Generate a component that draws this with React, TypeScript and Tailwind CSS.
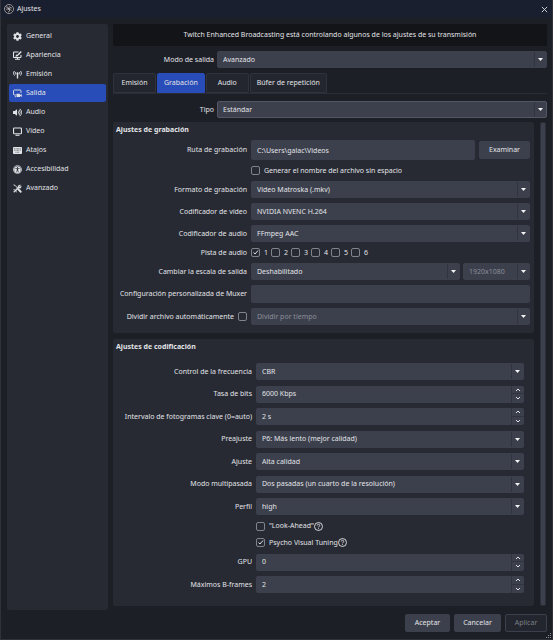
import type { ReactNode } from 'react';
import { FaCog, FaUniversalAccess, FaVolumeUp } from 'react-icons/fa';

const iconClass = 'size-[9px] shrink-0';

function AppearanceIcon() {
  return (
    <svg viewBox="0 0 18 18" className={iconClass} fill="none" stroke="currentColor" strokeWidth="2.200">
      <path d="M11 2H2.500a1.500 1.500 0 0 0-1.500 1.500v8A1.500 1.500 0 0 0 2.500 13h12a1.500 1.500 0 0 0 1.500-1.500V8" />
      <path d="M4 16.500h10M9 13v4" />
      <path d="M16.500 1 10 8" strokeWidth="2.800" />
      <path d="M4 11c1.500 0 1-4 4.200-4 2.600 0 3 4-.7 4z" fill="currentColor" stroke="none" />
    </svg>
  );
}

function AntennaIcon() {
  return (
    <svg viewBox="0 0 18 18" className={iconClass} fill="none" stroke="currentColor" strokeWidth="2">
      <path d="M3 2C.6 4.500.6 8.500 3 11M15 2c2.400 2.500 2.400 6.500 0 9M5.600 4c-1.200 1.500-1.200 3.500 0 5M12.400 4c1.200 1.500 1.200 3.500 0 5" />
      <circle cx="9" cy="6.500" r="2.200" fill="currentColor" stroke="none" />
      <path d="M9 7v10" strokeWidth="2.800" />
    </svg>
  );
}

function OutputIcon() {
  return (
    <svg viewBox="0 0 18 18" className={iconClass} fill="none" stroke="currentColor" strokeWidth="1.800">
      <path d="M6 12H3a2 2 0 0 1-2-2V4a2 2 0 0 1 2-2h11a2 2 0 0 1 2 2v4M3.500 15.500H6" />
      <rect x="7" y="9.500" width="7" height="6.500" rx="1" fill="currentColor" stroke="none" />
      <path d="m14 12 3.500-2v6L14 14z" fill="currentColor" stroke="none" />
    </svg>
  );
}

function MonitorIcon() {
  return (
    <svg viewBox="0 0 18 18" className={iconClass} fill="none" stroke="currentColor" strokeWidth="2.200">
      <rect x="1.100" y="2" width="15.800" height="11.500" rx="1.500" />
      <path d="M5 16.500h8" />
    </svg>
  );
}

function KeyboardIcon() {
  return (
    <svg viewBox="0 0 18 18" className={iconClass}>
      <rect x="0" y="2" width="18" height="14" rx="1.500" fill="currentColor" />
      <path d="M2.500 5.500h13M2.500 8.500h13M5 12.500h8" stroke="#272a33" strokeWidth="1.400" strokeDasharray="1.600 1.200" />
    </svg>
  );
}

function ToolsIcon() {
  return (
    <svg viewBox="0 0 18 18" className={iconClass} fill="none" stroke="currentColor" strokeLinecap="round">
      <path d="m2 2 2.500 1 5 5.500" strokeWidth="2" />
      <path d="m11 11 4.500 4.500" strokeWidth="3.600" />
      <path d="m2.500 15.500 9-9" strokeWidth="3" />
      <path d="M15 2.200 12.500 5l.8 1 3-2.200c1 2.500-.8 5-3.800 4.700L10 6c-.3-3 2.500-5 5-3.800z" fill="currentColor" strokeWidth=".6" />
      <path d="M1.500 11c1.500-.8 5 1.500 5.500 5" strokeWidth="1.400" />
    </svg>
  );
}

function ObsLogo() {
  return (
    <svg viewBox="0 0 20 20" className="size-[10px]" fill="none" stroke="#c9cbd1">
      <circle cx="10" cy="10" r="9" fill="#15161b" strokeWidth="1.400" />
      <path d="M6 4.500c-.5 3 1 5.200 4 5.500M15.500 8c-2.500-1.500-5-.8-5.500 2M8.500 16c3-.8 3.800-3.600 1.500-6" strokeWidth="1.800" />
      <path d="M4 9c1 3 3.500 4 6 1M12 4c-2.500 1-3.200 3.500-2 6M15 13.500c-.8-2.800-2.800-4-5-3.500" strokeWidth="1.200" />
    </svg>
  );
}

const sections: { label: string; icon: ReactNode; active?: boolean }[] = [
  { label: 'General', icon: <FaCog className={iconClass} /> },
  { label: 'Apariencia', icon: <AppearanceIcon /> },
  { label: 'Emisión', icon: <AntennaIcon /> },
  { label: 'Salida', icon: <OutputIcon />, active: true },
  { label: 'Audio', icon: <FaVolumeUp className={iconClass} /> },
  { label: 'Vídeo', icon: <MonitorIcon /> },
  { label: 'Atajos', icon: <KeyboardIcon /> },
  { label: 'Accesibilidad', icon: <FaUniversalAccess className={iconClass} /> },
  { label: 'Avanzado', icon: <ToolsIcon /> },
];

const tabs = ['Emisión', 'Grabación', 'Audio', 'Búfer de repetición'];

export default function App() {
  return (
    <div className="flex min-h-screen flex-col border-x border-b border-[#30323a] bg-[#1d1f26] font-['Noto_Sans','Open_Sans',sans-serif] text-[7px] leading-[10px] text-[#e2e3e7]">
      <header className="flex h-[18px] items-center gap-[3px] bg-[#1a1f30] pr-[3px] pl-[3px]">
        <ObsLogo />
        <h1 className="flex-1">Ajustes</h1>
        <button type="button" aria-label="Cerrar" className="p-px">
          <svg viewBox="0 0 8 8" className="size-[7px]" stroke="currentColor" fill="none">
            <path d="m1 1 6 6M7 1 1 7" />
          </svg>
        </button>
      </header>

      <div className="flex flex-1 gap-[5px] pt-[6px] pr-[5px] pl-[6px]">
        <nav className="flex w-[101px] shrink-0 flex-col gap-px rounded-[2px] bg-[#272a33] px-[2px] pt-[3px]">
          {sections.map((s) => (
            <button
              key={s.label}
              type="button"
              className={`flex h-[18px] items-center gap-1 rounded-[2px] px-1 text-left ${s.active ? 'bg-[#284cb8]' : ''}`}
            >
              {s.icon}
              {s.label}
            </button>
          ))}
        </nav>

        <main className="flex min-w-0 flex-1 flex-col pb-1">
          <p className="rounded-[2px] bg-[#131418] py-[6px] text-center">
            Twitch Enhanced Broadcasting está controlando algunos de los ajustes de su transmisión
          </p>

          <div className="mt-[5px] grid grid-cols-[101px_1fr] items-center gap-[3px]">
            <Label htmlFor="modo">Modo de salida</Label>
            <Dropdown id="modo" value="Avanzado" />
          </div>

          <div role="tablist" className="mt-[5px] flex gap-px border-b border-[#2a2d36]">
            {tabs.map((t) => (
              <button
                key={t}
                type="button"
                role="tab"
                aria-selected={t === 'Grabación'}
                className={`h-[20px] min-w-[43px] rounded-t-[2px] border px-[6px] ${
                  t === 'Grabación' ? 'border-[#284cb8] bg-[#284cb8]' : 'border-[#30333d] bg-[#23262e]'
                }`}
              >
                {t}
              </button>
            ))}
          </div>

          <div className="mt-[7px] grid grid-cols-[101px_1fr] items-center gap-[3px]">
            <Label htmlFor="tipo">Tipo</Label>
            <Dropdown id="tipo" value="Estándar" focused />
          </div>

          <div className="mt-1 flex flex-1 gap-[6px]">
            <div className="flex min-w-0 flex-1 flex-col gap-[6px]">
              <RecordingSettings />
              <EncodingSettings />
            </div>
            <div className="mr-px w-[6px] rounded-[2px] border border-[#2c2f39] bg-[#3c404d]" />
          </div>
        </main>
      </div>

      <footer className="flex justify-end gap-1 pt-1 pr-[5px]">
        <Button className="w-[45px]">Aceptar</Button>
        <Button className="w-[47px]">Cancelar</Button>
        <Button className="w-[42px]" disabled>
          Aplicar
        </Button>
      </footer>
      <svg viewBox="0 0 6 6" className="mt-px size-[6px] self-end" fill="#8c8e95">
        <path d="M4 0h1v1H4zM2 2h1v1H2zM4 2h1v1H4zM0 4h1v1H0zM2 4h1v1H2zM4 4h1v1H4z" />
      </svg>
    </div>
  );
}

function RecordingSettings() {
  return (
    <section className="rounded-[2px] bg-[#272a33] pt-[3px] pr-1 pb-2 pl-[3px]">
      <h2 className="font-bold">Ajustes de grabación</h2>
      <div className="mt-[5px] grid grid-cols-[131px_1fr] items-center gap-x-1 gap-y-[5px]">
        <Label htmlFor="ruta">Ruta de grabación</Label>
        <div className="flex items-center gap-1">
          <input id="ruta" defaultValue="C:\Users\galac\Videos" className="h-[20px] min-w-0 flex-1 rounded-[2px] bg-[#3c404d] px-[6px]" />
          <Button className="w-[51px]">Examinar</Button>
        </div>
        <div className="col-start-2">
          <Check label="Generar el nombre del archivo sin espacio" />
        </div>
        <Label htmlFor="formato">Formato de grabación</Label>
        <Dropdown id="formato" value="Video Matroska (.mkv)" />
        <Label htmlFor="cvideo">Codificador de vídeo</Label>
        <Dropdown id="cvideo" value="NVIDIA NVENC H.264" />
        <Label htmlFor="caudio">Codificador de audio</Label>
        <Dropdown id="caudio" value="FFmpeg AAC" />
        <span className="text-right">Pista de audio</span>
        <div className="flex gap-[3px]">
          {['1', '2', '3', '4', '5', '6'].map((n) => (
            <Check key={n} label={n} checked={n === '1'} />
          ))}
        </div>
        <Label htmlFor="escala">Cambiar la escala de salida</Label>
        <div className="grid grid-cols-[1fr_67px] gap-[3px]">
          <Dropdown id="escala" value="Deshabilitado" />
          <Dropdown id="resolucion" value="1920x1080" ariaLabel="Resolución" disabled />
        </div>
        <Label htmlFor="muxer">Configuración personalizada de Muxer</Label>
        <input id="muxer" className="h-[18px] w-full rounded-[2px] bg-[#3c404d] px-[6px]" />
        <div className="flex justify-end">
          <Check label="Dividir archivo automáticamente" labelFirst />
        </div>
        <Dropdown id="dividir" value="Dividir por tiempo" ariaLabel="Modo de división" disabled />
      </div>
    </section>
  );
}

function EncodingSettings() {
  return (
    <section className="flex flex-1 flex-col rounded-[2px] bg-[#272a33] pt-[3px] pr-[10px] pb-[13px] pl-[3px]">
      <h2 className="font-bold">Ajustes de codificación</h2>
      <div className="mt-[11px] grid flex-1 grid-cols-[136px_1fr] content-between items-center gap-x-1">
        <Label htmlFor="frecuencia">Control de la frecuencia</Label>
        <Dropdown id="frecuencia" value="CBR" />
        <Label htmlFor="bits">Tasa de bits</Label>
        <Spinner id="bits" value="6000 Kbps" />
        <Label htmlFor="intervalo">Intervalo de fotogramas clave (0=auto)</Label>
        <Spinner id="intervalo" value="2 s" />
        <Label htmlFor="preajuste">Preajuste</Label>
        <Dropdown id="preajuste" value="P6: Más lento (mejor calidad)" />
        <Label htmlFor="ajuste">Ajuste</Label>
        <Dropdown id="ajuste" value="Alta calidad" />
        <Label htmlFor="multipasada">Modo multipasada</Label>
        <Dropdown id="multipasada" value="Dos pasadas (un cuarto de la resolución)" />
        <Label htmlFor="perfil">Perfil</Label>
        <Dropdown id="perfil" value="high" />
        <div className="col-start-2">
          <Check label={'"Look-Ahead"'} help />
        </div>
        <div className="col-start-2">
          <Check label="Psycho Visual Tuning" checked help />
        </div>
        <Label htmlFor="gpu">GPU</Label>
        <Spinner id="gpu" value="0" />
        <Label htmlFor="bframes">Máximos B-frames</Label>
        <Spinner id="bframes" value="2" />
      </div>
    </section>
  );
}

function Label({ htmlFor, children }: { htmlFor: string; children: ReactNode }) {
  return (
    <label htmlFor={htmlFor} className="text-right whitespace-nowrap">
      {children}
    </label>
  );
}

function Dropdown({ id, value, ariaLabel, disabled, focused }: { id: string; value: string; ariaLabel?: string; disabled?: boolean; focused?: boolean }) {
  return (
    <div className={`grid h-[17px] rounded-[2px] border bg-[#3c404d] ${focused ? 'border-[#525665]' : 'border-[#3c404d]'}`}>
      <select
        id={id}
        aria-label={ariaLabel}
        disabled={disabled}
        defaultValue={value}
        className="col-start-1 row-start-1 w-full appearance-none pr-4 pl-[5px] opacity-100 disabled:text-[#8b8e98]"
      >
        <option>{value}</option>
      </select>
      <span className="pointer-events-none col-start-1 row-start-1 flex w-[12px] items-center justify-center justify-self-end border-l border-[#31343f]">
        <svg viewBox="0 0 5 3" className="h-[3px] w-[5px]" fill="#f4f4f6">
          <path d="M0 0h5L2.500 3z" />
        </svg>
      </span>
    </div>
  );
}

function Spinner({ id, value }: { id: string; value: string }) {
  return (
    <div className="flex h-[17px] overflow-hidden rounded-[2px] bg-[#3c404d]">
      <input id={id} defaultValue={value} className="min-w-0 flex-1 px-[6px]" />
      <div className="grid w-[13px] grid-rows-2 border-l border-[#31343f]">
        <button type="button" aria-label="Aumentar" className="flex items-center justify-center border-b border-[#31343f] pt-px">
          <Chevron d="m1 3 2-2 2 2" />
        </button>
        <button type="button" aria-label="Reducir" className="flex items-center justify-center">
          <Chevron d="m1 1 2 2 2-2" />
        </button>
      </div>
    </div>
  );
}

function Chevron({ d }: { d: string }) {
  return (
    <svg viewBox="0 0 6 4" className="h-[4px] w-[6px]" fill="none" stroke="#e2e3e7">
      <path d={d} />
    </svg>
  );
}

function Check({ label, checked, labelFirst, help }: { label: string; checked?: boolean; labelFirst?: boolean; help?: boolean }) {
  return (
    <label className={`flex h-[11px] w-fit items-center gap-1 whitespace-nowrap ${labelFirst ? 'flex-row-reverse' : ''}`}>
      <span className="grid size-[9px] place-items-center">
        <input
          type="checkbox"
          defaultChecked={checked}
          className="peer col-start-1 row-start-1 size-[9px] appearance-none rounded-[2px] border border-[#80838c]"
        />
        <svg viewBox="0 0 7 7" className="pointer-events-none invisible col-start-1 row-start-1 size-[7px] peer-checked:visible" fill="none" stroke="#e2e3e7">
          <path d="m1.500 3.500 1.500 1.500 3-3.500" />
        </svg>
      </span>
      <span className="flex items-center">
        {label}
        {help && (
          <svg viewBox="0 0 18 18" className="size-[9px]" fill="none" stroke="currentColor" strokeWidth="1.800">
            <circle cx="9" cy="9" r="8" />
            <path d="M6.500 7c0-3.300 5-3.300 5 0 0 1.800-2.500 1.800-2.500 3.800M9 12.500v1.800" />
          </svg>
        )}
      </span>
    </label>
  );
}

function Button({ children, className, disabled }: { children: ReactNode; className: string; disabled?: boolean }) {
  return (
    <button
      type="button"
      disabled={disabled}
      className={`h-[18px] shrink-0 rounded-[2px] border border-[#3c404d] bg-[#3c404d] disabled:bg-[#23262e] disabled:text-[#7b7e88] ${className}`}
    >
      {children}
    </button>
  );
}
